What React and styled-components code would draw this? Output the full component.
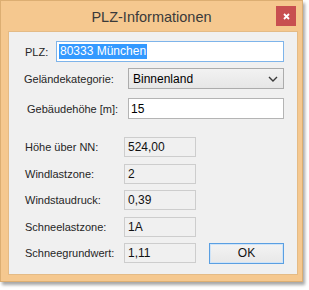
import styled, { createGlobalStyle } from 'styled-components';

const GlobalStyle = createGlobalStyle`
  html, body {
    margin: 0;
    padding: 0;
    background: #ffffff;
  }
`;

function App() {
  return (
    <>
      <GlobalStyle />
      <Page>
        <Window>
          <TitleBar>
            <Title>PLZ-Informationen</Title>
            <CloseButton>
              <svg width="7" height="7" viewBox="0 0 7 7">
                <path d="M1 1 L6 6 M6 1 L1 6" stroke="#ffffff" strokeWidth="1.8" />
              </svg>
            </CloseButton>
          </TitleBar>
          <Client>
            <Row indent={1} top={0}>
              <Label width={31}>PLZ:</Label>
              <TextField focused>
                <Selected>80333 München</Selected>
              </TextField>
            </Row>
            <Row indent={0} top={6}>
              <Label width={104}>Geländekategorie:</Label>
              <Select>
                <span>Binnenland</span>
                <svg width="10" height="6" viewBox="0 0 10 6">
                  <path d="M1 1 L5 5 L9 1" stroke="#3a3a3a" strokeWidth="1.4" fill="none" />
                </svg>
              </Select>
            </Row>
            <Row indent={3} top={9}>
              <Label width={101}>Gebäudehöhe [m]:</Label>
              <TextField>15</TextField>
            </Row>
            <Results>
              <Label>Höhe über NN:</Label>
              <ReadOnly>524,00</ReadOnly>
              <span />
              <Label>Windlastzone:</Label>
              <ReadOnly>2</ReadOnly>
              <span />
              <Label>Windstaudruck:</Label>
              <ReadOnly>0,39</ReadOnly>
              <span />
              <Label>Schneelastzone:</Label>
              <ReadOnly>1A</ReadOnly>
              <span />
              <Label>Schneegrundwert:</Label>
              <ReadOnly>1,11</ReadOnly>
              <OkButton>OK</OkButton>
            </Results>
          </Client>
        </Window>
      </Page>
    </>
  );
}

const Page = styled.div`
  width: 309px;
  height: 290px;
  font-family: 'Liberation Sans', Arial, sans-serif;
`;

const Window = styled.div`
  box-sizing: border-box;
  width: 303px;
  height: 282px;
  display: flex;
  flex-direction: column;
  background: #f5c88f;
  border: 1px solid #dcae72;
  box-shadow: 2px 3px 3px rgba(0, 0, 0, 0.35);
`;

const TitleBar = styled.div`
  position: relative;
  height: 30px;
  display: flex;
  align-items: center;
  justify-content: center;
`;

const Title = styled.div`
  font-size: 14.5px;
  color: #3a3a3a;
  margin-top: 1px;
`;

const CloseButton = styled.div`
  position: absolute;
  top: 5px;
  right: 6px;
  width: 20px;
  height: 20px;
  background: #c84f50;
  display: flex;
  align-items: center;
  justify-content: center;
`;

const Client = styled.div`
  box-sizing: border-box;
  margin: 0 4px 0 7px;
  height: 244px;
  background: #f0f0f0;
  border: 1px solid #e4bb86;
  padding: 9px 13px 0 15px;
  display: flex;
  flex-direction: column;
`;

const Row = styled.div`
  display: flex;
  align-items: center;
  height: 21px;
  margin-top: ${(p) => p.top}px;
  padding-left: ${(p) => p.indent}px;
`;

const Label = styled.div`
  font-size: 11px;
  color: #262626;
  white-space: nowrap;
  ${(p) => (p.width ? `width: ${p.width}px;` : '')}
`;

const TextField = styled.div`
  box-sizing: border-box;
  flex: 1;
  height: 21px;
  display: flex;
  align-items: center;
  padding-left: 2px;
  font-size: 12px;
  color: #000;
  background: #ffffff;
  border: 1px solid ${(p) => (p.focused ? '#7eb4ea' : '#b4b4b4')};
`;

const Selected = styled.span`
  background: #3399ff;
  color: #ffffff;
  line-height: 15px;
  padding: 0 1px;
`;

const Select = styled.div`
  box-sizing: border-box;
  flex: 1;
  height: 21px;
  display: flex;
  align-items: center;
  justify-content: space-between;
  padding: 0 5px 0 4px;
  font-size: 12px;
  color: #000;
  background: linear-gradient(#f2f2f2, #e6e6e6);
  border: 1px solid #acacac;
`;

const Results = styled.div`
  display: grid;
  grid-template-columns: 99px 72px 1fr;
  grid-template-rows: repeat(5, 20px);
  row-gap: 6.5px;
  margin-top: 18px;
  padding-left: 1px;
  align-items: center;
`;

const ReadOnly = styled.div`
  box-sizing: border-box;
  height: 20px;
  display: flex;
  align-items: center;
  padding-left: 3px;
  font-size: 12px;
  color: #111;
  border: 1px solid #cdcdcd;
`;

const OkButton = styled.div`
  box-sizing: border-box;
  justify-self: end;
  width: 75px;
  height: 21px;
  display: flex;
  align-items: center;
  justify-content: center;
  font-size: 12px;
  color: #111;
  background: linear-gradient(#f3f3f3, #e8e8e8);
  border: 1px solid #5a9fe2;
  box-shadow: inset 0 0 0 1px #cfe4f8;
`;

export default App;
